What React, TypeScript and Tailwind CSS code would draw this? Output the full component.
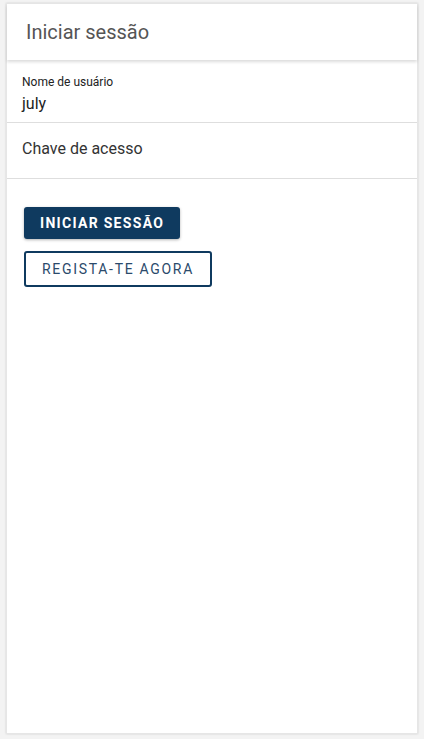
export default function App() {
  return (
    <div
      className="min-h-[739px] bg-[#f3f3f3] px-[6px] pt-[3px] pb-[5px] flex flex-col"
      style={{ fontFamily: "Roboto, 'Liberation Sans', sans-serif" }}
    >
      <div className="flex flex-col flex-1 bg-white shadow-[0_0_2px_rgba(0,0,0,0.15)] border border-[#e6e6e6]">
        <header className="h-[56px] flex items-center px-[19px] bg-white shadow-[0_2px_3px_rgba(0,0,0,0.14)] relative z-10">
          <h1 className="text-[20px] text-[#555] font-normal">Iniciar sessão</h1>
        </header>

        <div className="mt-[3px] flex-1 flex flex-col">
          <div className="h-[60px] border-b border-[#dedede] px-[15px] pt-[12px]">
            <div className="text-[12px] leading-[14px] text-[#222]">Nome de usuário</div>
            <div className="text-[16px] leading-[20px] mt-[5px] text-[#222]">july</div>
          </div>
          <div className="h-[56px] border-b border-[#dedede] px-[15px] pb-[4px] flex items-center">
            <span className="text-[16px] text-[#333]">Chave de acesso</span>
          </div>

          <div className="px-[17px] pt-[28px] flex flex-col items-start gap-[12px]">
            <button className="h-[32px] px-[16px] rounded-[3px] bg-[#0f3a5f] text-white text-[14px] font-bold tracking-[1.3px] shadow-[0_1px_3px_rgba(0,0,0,0.3)]">
              INICIAR SESSÃO
            </button>
            <button className="h-[36px] px-[16px] rounded-[3px] border-2 border-[#0f3a5f] bg-white text-[#2b4a6b] text-[14px] tracking-[1.7px]">
              REGISTA-TE AGORA
            </button>
          </div>
        </div>
      </div>
    </div>
  );
}
